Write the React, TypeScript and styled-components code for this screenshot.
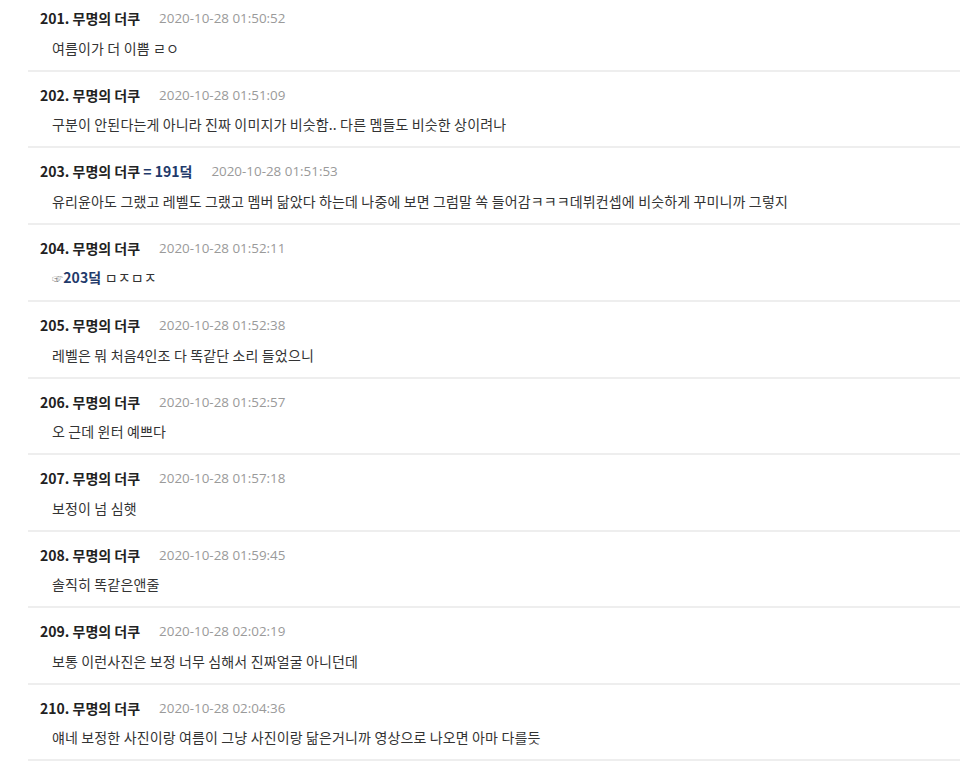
import styled, { createGlobalStyle } from "styled-components";

const GlobalStyle = createGlobalStyle`
    body {
        margin: 0;
        background: #fff;
        font-family: "Noto Sans CJK KR", "Noto Sans", sans-serif;
        overflow: hidden;
    }
`;

type Comment = {
    no: number;
    date: string;
    ref?: string;
    quote?: string;
    text: string;
};

const comments: Comment[] = [
    { no: 201, date: "2020-10-28 01:50:52", text: "여름이가 더 이쁨 ㄹㅇ" },
    { no: 202, date: "2020-10-28 01:51:09", text: "구분이 안된다는게 아니라 진짜 이미지가 비슷함.. 다른 멤들도 비슷한 상이려나" },
    { no: 203, date: "2020-10-28 01:51:53", ref: "= 191덬", text: "유리윤아도 그랬고 레벨도 그랬고 멤버 닮았다 하는데 나중에 보면 그럼말 쏙 들어감ㅋㅋㅋ데뷔컨셉에 비슷하게 꾸미니까 그렇지" },
    { no: 204, date: "2020-10-28 01:52:11", quote: "203덬", text: " ㅁㅈㅁㅈ" },
    { no: 205, date: "2020-10-28 01:52:38", text: "레벨은 뭐 처음4인조 다 똑같단 소리 들었으니" },
    { no: 206, date: "2020-10-28 01:52:57", text: "오 근데 윈터 예쁘다" },
    { no: 207, date: "2020-10-28 01:57:18", text: "보정이 넘 심햇" },
    { no: 208, date: "2020-10-28 01:59:45", text: "솔직히 똑같은앤줄" },
    { no: 209, date: "2020-10-28 02:02:19", text: "보통 이런사진은 보정 너무 심해서 진짜얼굴 아니던데" },
    { no: 210, date: "2020-10-28 02:04:36", text: "얘네 보정한 사진이랑 여름이 그냥 사진이랑 닮은거니까 영상으로 나오면 아마 다를듯" },
];

const ListSc = styled.ul`
    list-style: none;
    margin: -5px 0 0 28px;
    padding: 0;
`;

const ItemSc = styled.li`
    padding: 14px 12px 12px;
    border-bottom: 2px solid #eeeeee;
`;

const HeadSc = styled.div`
    display: flex;
    align-items: center;
    gap: 19px;
    height: 18px;
`;

const NameSc = styled.span`
    font-size: 14px;
    font-weight: 700;
    color: #222;
`;

const RefSc = styled.span`
    color: #1f3a6b;
`;

const DateSc = styled.span`
    font-family: "Open Sans", sans-serif;
    font-size: 13.4px;
    color: #9a9a9a;
`;

const BodySc = styled.div`
    margin-top: 10.5px;
    padding-left: 12px;
    font-size: 14px;
    line-height: 20px;
    letter-spacing: 0.14px;
    color: #333;
`;

const QuoteSc = styled.span`
    color: #1f3a6b;
    font-weight: 700;
`;

const HandSc = styled.span`
    font-size: 11px;
    font-weight: 400;
    color: #8a8a8a;
`;

const App = () => {
    return (
        <>
            <GlobalStyle />
            <ListSc>
                {comments.map(c => (
                    <ItemSc key={c.no}>
                        <HeadSc>
                            <NameSc>
                                {c.no}. 무명의 더쿠{c.ref && <RefSc> {c.ref}</RefSc>}
                            </NameSc>
                            <DateSc>{c.date}</DateSc>
                        </HeadSc>
                        <BodySc>
                            {c.quote && (
                                <QuoteSc>
                                    <HandSc>☞</HandSc>
                                    {c.quote}
                                </QuoteSc>
                            )}
                            {c.text}
                        </BodySc>
                    </ItemSc>
                ))}
            </ListSc>
        </>
    );
};

export default App;
